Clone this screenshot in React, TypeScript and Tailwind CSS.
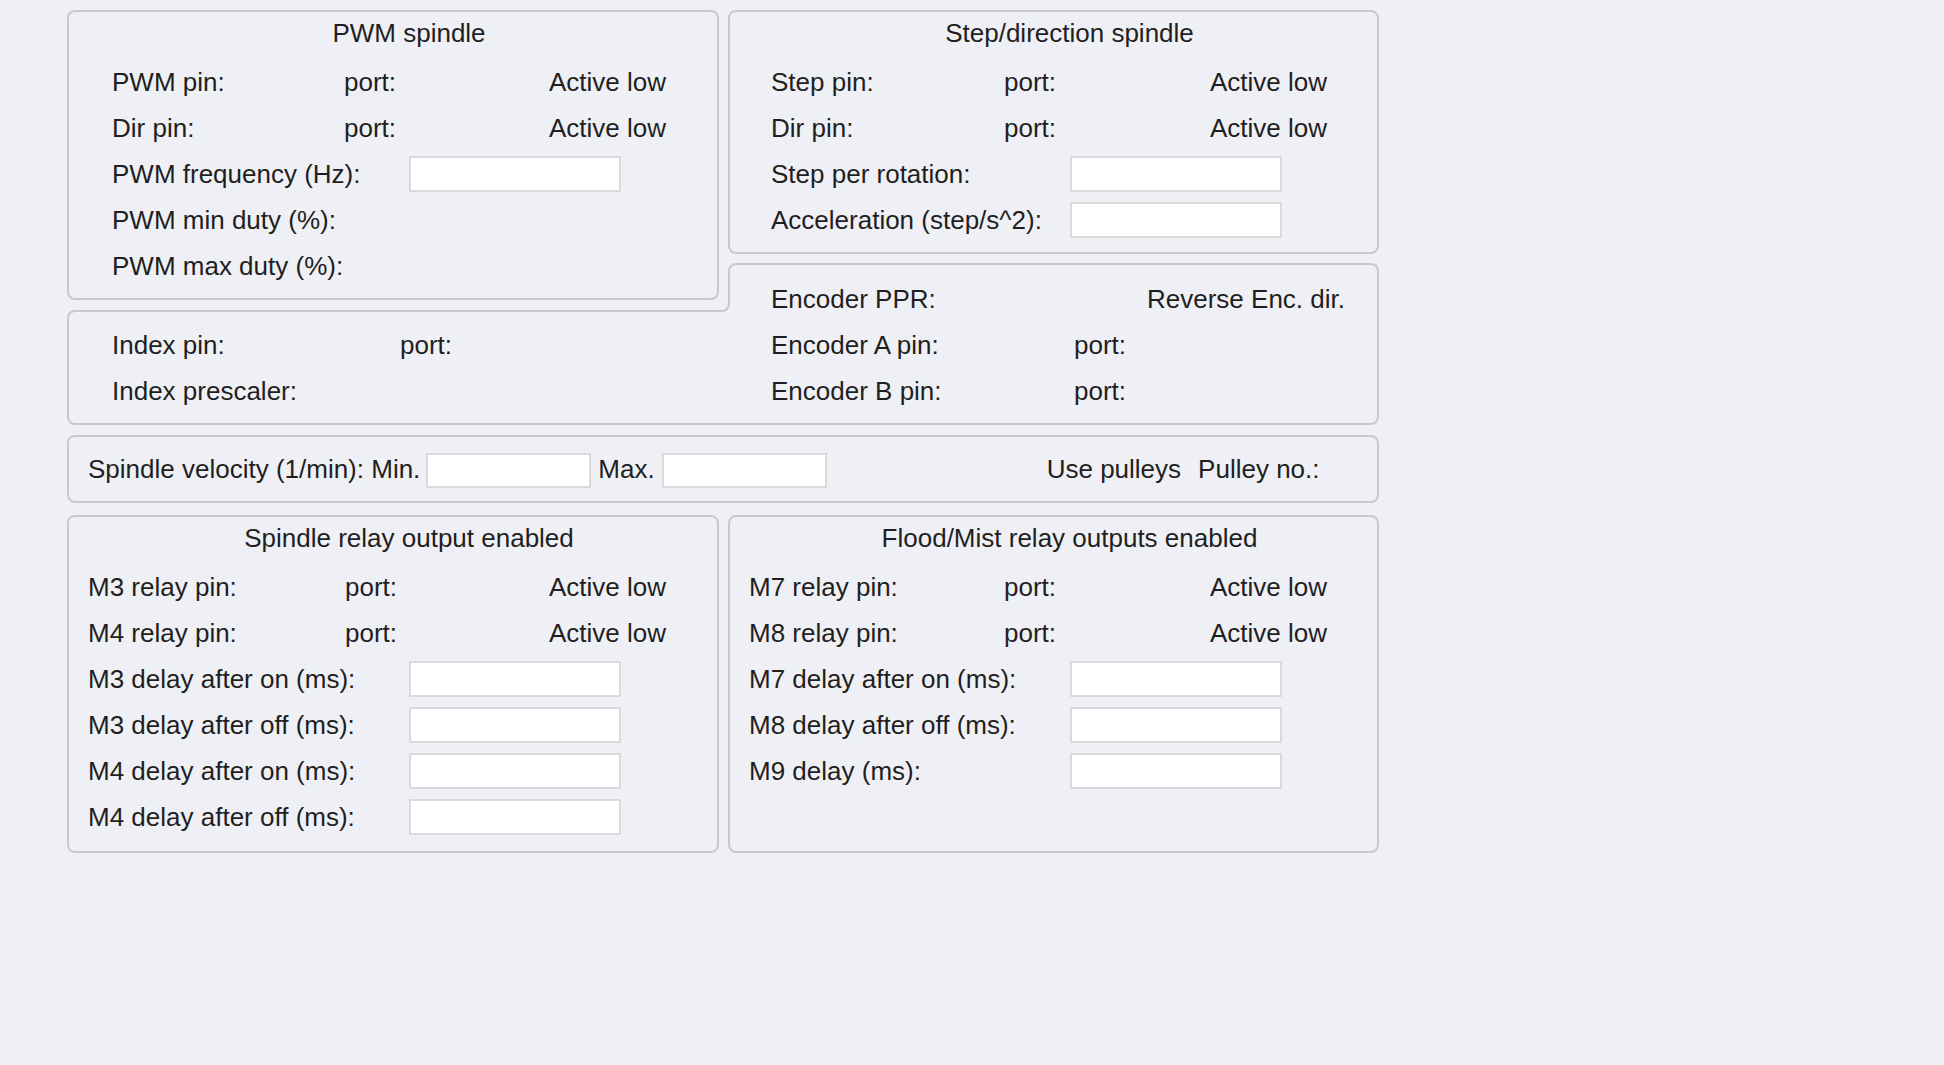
import React from 'react';

const boxCls = 'rounded-lg border-2 border-[#c9c9cd]';

const Field: React.FC<{ className?: string }> = ({ className = 'h-[36px] w-[212px]' }) => (
  <div className={`${className} border-2 border-[#dadadd] bg-white`} />
);

const Title: React.FC<{ text: string }> = ({ text }) => (
  <div className="flex h-[42px] items-center justify-center pl-[32px]">{text}</div>
);

// label / port / Active low row
const PinRow: React.FC<{ label: string; labelW: string; portW: string; active?: boolean }> = ({
  label,
  labelW,
  portW,
  active = true,
}) => (
  <div className="flex h-[46px] items-center whitespace-nowrap">
    <span className={labelW}>{label}</span>
    <span className={portW}>port:</span>
    {active && <span>Active low</span>}
  </div>
);

const InputRow: React.FC<{ label: string; labelW: string; field?: boolean }> = ({ label, labelW, field = true }) => (
  <div className="flex h-[46px] items-center whitespace-nowrap">
    <span className={labelW}>{label}</span>
    {field && <Field />}
  </div>
);

export default function App() {
  return (
    <div className="min-h-screen w-full bg-[#eff0f5] pl-[67px] pt-[10px] font-['Liberation_Sans',Arial,sans-serif] text-[26px] leading-[30px] text-[#1f1f21]">
      <div className="flex w-[1312px] flex-col">
        {/* top: PWM + step/direction */}
        <div className="grid grid-cols-[652px_651px] items-start gap-x-[9px]">
          <div className={`${boxCls} h-[290px]`}>
            <Title text="PWM spindle" />
            <div className="mt-[5px] pl-[43px]">
              <PinRow label="PWM pin:" labelW="w-[232px]" portW="w-[205px]" />
              <PinRow label="Dir pin:" labelW="w-[232px]" portW="w-[205px]" />
              <InputRow label="PWM frequency (Hz):" labelW="w-[297px]" />
              <InputRow label="PWM min duty (%):" labelW="w-[297px]" field={false} />
              <InputRow label="PWM max duty (%):" labelW="w-[297px]" field={false} />
            </div>
          </div>

          <div className="flex flex-col">
            <div className={`${boxCls} h-[244px]`}>
              <Title text="Step/direction spindle" />
              <div className="mt-[5px] pl-[41px]">
                <PinRow label="Step pin:" labelW="w-[233px]" portW="w-[206px]" />
                <PinRow label="Dir pin:" labelW="w-[233px]" portW="w-[206px]" />
                <InputRow label="Step per rotation:" labelW="w-[299px]" />
                <InputRow label="Acceleration (step/s^2):" labelW="w-[299px]" />
              </div>
            </div>

            {/* encoder tab, joins the index/encoder box below */}
            <div className="relative z-10 -mb-[2px] mt-[9px] h-[49px] rounded-t-lg border-x-2 border-t-2 border-[#c9c9cd] bg-[#eff0f5] pl-[41px] pt-[22px]">
              <div className="flex h-[24px] items-center whitespace-nowrap">
                <span className="w-[376px]">Encoder PPR:</span>
                <span>Reverse Enc. dir.</span>
              </div>
              <div className="absolute bottom-0 left-[-10px] h-[10px] w-[10px] bg-[#eff0f5]">
                <div className="h-full w-full rounded-br-lg border-b-2 border-r-2 border-[#c9c9cd]" />
              </div>
            </div>
          </div>
        </div>

        {/* index / encoder pins */}
        <div className={`${boxCls} rounded-tr-none pb-[9px] pt-[10px]`}>
          <div className="grid grid-cols-[650px_651px] gap-x-[9px]">
            <div className="pl-[43px]">
              <PinRow label="Index pin:" labelW="w-[288px]" portW="w-[100px]" active={false} />
              <InputRow label="Index prescaler:" labelW="w-[288px]" field={false} />
            </div>
            <div className="pl-[43px]">
              <PinRow label="Encoder A pin:" labelW="w-[303px]" portW="w-[100px]" active={false} />
              <PinRow label="Encoder B pin:" labelW="w-[303px]" portW="w-[100px]" active={false} />
            </div>
          </div>
        </div>

        {/* spindle velocity */}
        <div className={`${boxCls} mt-[10px] flex h-[68px] items-center whitespace-nowrap pl-[19px]`}>
          <span>Spindle velocity (1/min): Min.</span>
          <Field className="ml-[6px] mt-[3px] h-[35px] w-[165px]" />
          <span className="ml-[7px]">Max.</span>
          <Field className="ml-[7px] mt-[3px] h-[35px] w-[165px]" />
          <span className="ml-[220px]">Use pulleys</span>
          <span className="ml-[17px]">Pulley no.:</span>
        </div>

        {/* relay outputs */}
        <div className="mt-[12px] grid grid-cols-[652px_651px] gap-x-[9px]">
          <div className={`${boxCls} pb-[11px]`}>
            <Title text="Spindle relay output enabled" />
            <div className="mt-[5px] pl-[19px]">
              <PinRow label="M3 relay pin:" labelW="w-[257px]" portW="w-[204px]" />
              <PinRow label="M4 relay pin:" labelW="w-[257px]" portW="w-[204px]" />
              <InputRow label="M3 delay after on (ms):" labelW="w-[321px]" />
              <InputRow label="M3 delay after off (ms):" labelW="w-[321px]" />
              <InputRow label="M4 delay after on (ms):" labelW="w-[321px]" />
              <InputRow label="M4 delay after off (ms):" labelW="w-[321px]" />
            </div>
          </div>
          <div className={`${boxCls} pb-[11px]`}>
            <Title text="Flood/Mist relay outputs enabled" />
            <div className="mt-[5px] pl-[19px]">
              <PinRow label="M7 relay pin:" labelW="w-[255px]" portW="w-[206px]" />
              <PinRow label="M8 relay pin:" labelW="w-[255px]" portW="w-[206px]" />
              <InputRow label="M7 delay after on (ms):" labelW="w-[321px]" />
              <InputRow label="M8 delay after off (ms):" labelW="w-[321px]" />
              <InputRow label="M9 delay (ms):" labelW="w-[321px]" />
            </div>
          </div>
        </div>
      </div>
    </div>
  );
}
